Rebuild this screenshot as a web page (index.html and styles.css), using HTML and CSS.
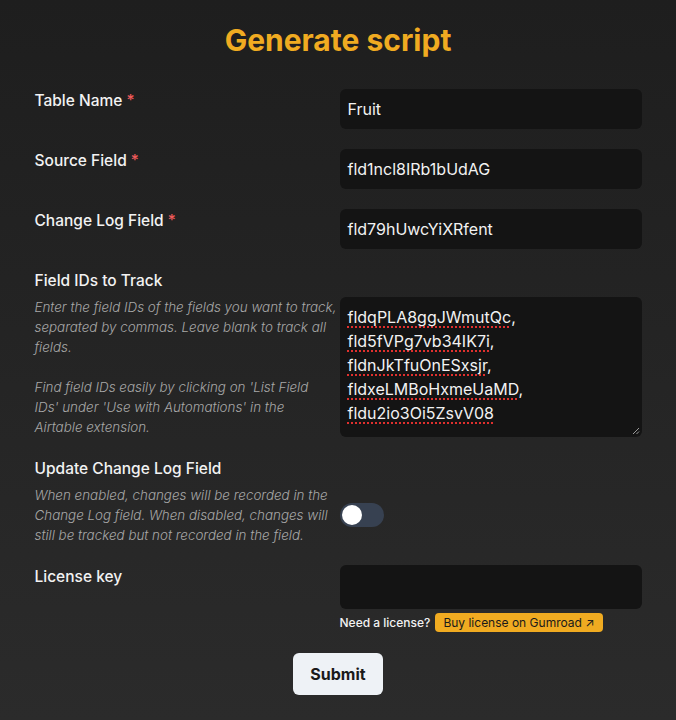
FILE: index.html
```html
<!DOCTYPE html>
<html lang="en">
<head>
  <meta charset="UTF-8">
  <meta name="viewport" content="width=device-width, initial-scale=1.0">
  <title>Generate script</title>
  <link rel="stylesheet" href="styles.css">
</head>
<body>
  <div class="page">
    <h1 class="title">Generate script</h1>
    <form class="form-grid">
      <div class="label-col">
        <label class="field-label">Table Name <span class="req">*</span></label>
      </div>
      <div class="input-col"><div class="text-input">Fruit</div></div>

      <div class="label-col">
        <label class="field-label">Source Field <span class="req">*</span></label>
      </div>
      <div class="input-col"><div class="text-input">fld1ncl8IRb1bUdAG</div></div>

      <div class="label-col">
        <label class="field-label">Change Log Field <span class="req">*</span></label>
      </div>
      <div class="input-col"><div class="text-input">fld79hUwcYiXRfent</div></div>

      <div class="label-col">
        <label class="field-label">Field IDs to Track</label>
        <p class="hint">Enter the field IDs of the fields you want to track, separated by commas. Leave blank to track all fields.</p>
        <p class="hint">Find field IDs easily by clicking on 'List Field<br>IDs' under 'Use with Automations' in the<br>Airtable extension.</p>
      </div>
      <div class="input-col with-hint">
        <div class="text-area">
          <span class="typo">fldqPLA8ggJWmutQc</span>,<br>
          <span class="typo">fld5fVPg7vb34IK7i</span>,<br>
          <span class="typo">fldnJkTfuOnESxsjr</span>,<br>
          <span class="typo">fldxeLMBoHxmeUaMD</span>,<br>
          <span class="typo">fldu2io3Oi5ZsvV08</span>
          <svg class="grip" width="8" height="8" viewBox="0 0 8 8"><path d="M7 1 L1 7 M7 4.5 L4.5 7" stroke="#9a9a9a" stroke-width="1"/></svg>
        </div>
      </div>

      <div class="label-col">
        <label class="field-label">Update Change Log Field</label>
        <p class="hint">When enabled, changes will be recorded in the Change Log field. When disabled, changes will still be tracked but not recorded in the field.</p>
      </div>
      <div class="input-col with-hint">
        <span class="toggle"><span class="knob"></span></span>
      </div>

      <div class="label-col">
        <label class="field-label">License key</label>
      </div>
      <div class="input-col">
        <div class="text-input tall"></div>
        <div class="license-row">
          <span>Need a license?</span>
          <a class="buy-link">Buy license on Gumroad ↗</a>
        </div>
      </div>
    </form>
    <div class="actions"><button class="submit-btn" type="button">Submit</button></div>
  </div>
</body>
</html>
```

FILE: styles.css
```css
html { background: #242424; }
body {
  margin: 0;
  min-height: 720px;
  font-family: Inter, "Noto Sans", sans-serif;
  color: #f2f2f2;
  background: linear-gradient(180deg, #1e1e1e 0%, #2b2b2b 100%);
}
.page { width: 607px; margin: 0 auto; padding-top: 21px; }
.title {
  margin: 0 0 30px;
  text-align: center;
  font-size: 30px;
  line-height: 38px;
  font-weight: 700;
  color: #f0ab21;
}
.form-grid {
  display: grid;
  grid-template-columns: 305px 302px;
  row-gap: 20px;
}
.field-label {
  display: block;
  font-size: 15.5px;
  font-weight: 500;
  line-height: 24px;
  color: #f2f2f2;
}
.req { color: #f05a5a; }
.label-col { padding-right: 2px; }
.hint {
  margin: 4px 0 20px;
  font-size: 13.4px;
  line-height: 20px;
  font-style: italic;
  font-weight: 300;
  color: #a8a8a8;
}
.hint + .hint { margin-top: 0; }
.hint:last-child { margin-bottom: 0; }
.with-hint {
  display: flex;
  flex-direction: column;
  justify-content: center;
  padding-top: 28px;
}
.text-input {
  height: 40px;
  box-sizing: border-box;
  padding: 0 8px;
  line-height: 40px;
  font-size: 16px;
  background: #141414;
  border-radius: 6px;
  color: #f2f2f2;
}
.text-input.tall { height: 44px; }
.text-area {
  position: relative;
  height: 140px;
  box-sizing: border-box;
  padding: 8px 8px;
  font-size: 16px;
  line-height: 24px;
  background: #141414;
  border-radius: 6px;
}
.typo { text-decoration: underline dotted #e0302e; text-decoration-thickness: 2px; text-underline-offset: 3px; }
.grip { position: absolute; right: 2px; bottom: 2px; }
.toggle {
  display: flex;
  align-items: center;
  width: 44px;
  height: 24px;
  border-radius: 12px;
  background: #374151;
  padding: 0 2px;
  box-sizing: border-box;
}
.knob { width: 20px; height: 20px; border-radius: 50%; background: #fff; }
.license-row {
  display: flex;
  align-items: center;
  gap: 5px;
  margin-top: 4px;
  font-size: 12px;
  font-weight: 500;
  color: #f2f2f2;
}
.buy-link {
  background: #f0ab21;
  color: #1a1a1a;
  border-radius: 4px;
  padding: 0 8px;
  line-height: 19px;
  font-weight: 400;
}
.actions { display: flex; justify-content: center; margin-top: 21px; }
.submit-btn {
  width: 90px;
  height: 42px;
  border: none;
  border-radius: 6px;
  background: #eef2f6;
  color: #1a1a1a;
  font-family: Inter, "Noto Sans", sans-serif;
  font-size: 16px;
  font-weight: 700;
}
```
